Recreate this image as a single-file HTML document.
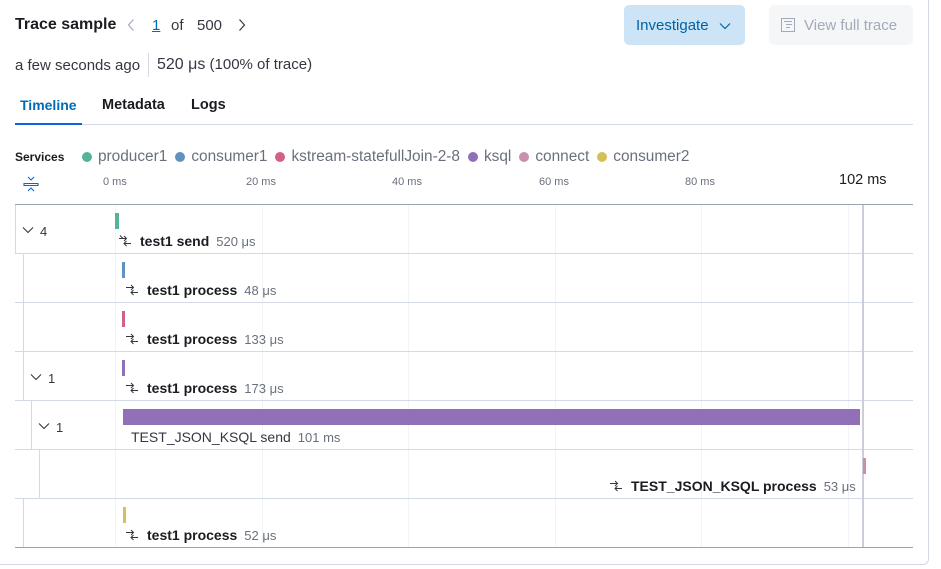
<!DOCTYPE html>
<html><head><meta charset="utf-8"><style>
*{box-sizing:border-box;margin:0;padding:0}
body{width:941px;height:569px;background:#fff;font-family:"Liberation Sans",sans-serif;color:#1a1c21;position:relative;overflow:hidden}
.panel{position:absolute;left:-10px;top:-10px;width:939px;height:575px;border:1px solid #d3dae6;border-radius:6px}
.a{position:absolute;white-space:nowrap}
.hl{position:absolute;left:15px;width:898px;height:1px;background:#d3dae6}
.vl{position:absolute;width:1px;background:#d3dae6}
.grid{position:absolute;top:205px;height:342px;width:1px;background:#f1f3f6}
.bar{position:absolute;width:3px;height:16px}
.lbl{position:absolute;font-size:14px;font-weight:bold;white-space:nowrap}
.lbl small{font-size:13px;font-weight:normal;color:#69707d;margin-left:7px}
.ic{display:inline-block;vertical-align:-2px;margin-right:8px}
.car{position:absolute;font-size:13px;color:#343741}
.dot{display:inline-block;width:10px;height:10px;border-radius:50%;margin:0 6px 0 0;vertical-align:-1px}
.sv{margin-right:8px}
</style></head><body>
<div class="panel"></div>
<div class="a" style="left:15px;top:16px;font-size:16px;font-weight:bold">Trace sample</div>
<svg class="a" style="left:127px;top:18px" width="8" height="14" viewBox="0 0 8 14"><path d="M6.5 1.5L1.5 7l5 5.5" fill="none" stroke="#a2abba" stroke-width="1.2"/></svg>
<div class="a" style="left:152px;top:17px;font-size:15px;color:#006bb8;text-decoration:underline">1</div>
<div class="a" style="left:171px;top:17px;font-size:15px;color:#343741">of</div>
<div class="a" style="left:197px;top:17px;font-size:15px;color:#343741">500</div>
<svg class="a" style="left:238px;top:18px" width="8" height="14" viewBox="0 0 8 14"><path d="M1.5 1.5L6.5 7l-5 5.5" fill="none" stroke="#343741" stroke-width="1.2"/></svg>
<div class="a" style="left:624px;top:5px;width:121px;height:40px;background:#cce4f5;border-radius:5px;color:#0061a6;font-size:15px;padding:12px 0 0 12px">Investigate <span style="display:inline-block;margin-left:6px"><svg width="12" height="8" viewBox="0 0 12 8"><path d="M1 1.5l5 5 5-5" fill="none" stroke="#0061a6" stroke-width="1.2"/></svg></span></div>
<div class="a" style="left:769px;top:5px;width:144px;height:40px;background:#f5f6f8;border-radius:5px;color:#a2abba;font-size:15px;padding:12px 0 0 11px"><svg width="16" height="16" viewBox="0 0 16 16" style="vertical-align:-3px;margin-right:8px"><rect x="1.5" y="1.5" width="13" height="13" fill="none" stroke="#a2abba"/><path d="M4 4.5h8M6 7.5h6M6 10.5h4" stroke="#a2abba"/></svg>View full trace</div>
<div class="a" style="left:15px;top:57px;font-size:15px;color:#343741">a few seconds ago</div>
<div class="vl" style="left:148px;top:53px;height:24px"></div>
<div class="a" style="left:157px;top:56px;font-size:15px;color:#343741"><span style="font-size:16px">520 μs</span> (100% of trace)</div>
<div class="a" style="left:20px;top:97px;font-size:14px;font-weight:bold;color:#006bb8">Timeline</div>
<div class="a" style="left:102px;top:97px;font-size:14.5px;font-weight:bold">Metadata</div>
<div class="a" style="left:191px;top:97px;font-size:14.5px;font-weight:bold">Logs</div>
<div class="a" style="left:15px;top:124px;width:898px;height:1px;background:#d3dae6"></div>
<div class="a" style="left:15px;top:123px;width:67px;height:2px;background:#0b64dd"></div>
<div class="a" style="left:15px;top:150px;font-size:12px;font-weight:bold">Services</div>
<div class="a" style="left:82px;top:148px;font-size:15.4px;color:#69707d">
<span class="dot" style="background:#54b399"></span><span class="sv">producer1</span><span class="dot" style="background:#6092c0"></span><span class="sv">consumer1</span><span class="dot" style="background:#d36086"></span><span class="sv">kstream-statefullJoin-2-8</span><span class="dot" style="background:#9170b8"></span><span class="sv">ksql</span><span class="dot" style="background:#ca8eae"></span><span class="sv">connect</span><span class="dot" style="background:#d6bf57"></span><span class="sv">consumer2</span></div>
<svg class="a" style="left:23px;top:176px" width="16" height="16" viewBox="0 0 16 16"><path d="M5 1l3 3 3-3M1 7.5h14v2H1zM5 15l3-3 3 3" fill="none" stroke="#0b64dd" stroke-width="1.1"/></svg>
<div class="a" style="left:103px;top:176px;font-size:11px;color:#69707d">0 ms</div>
<div class="a" style="left:246px;top:176px;font-size:11px;color:#69707d">20 ms</div>
<div class="a" style="left:392px;top:176px;font-size:11px;color:#69707d">40 ms</div>
<div class="a" style="left:539px;top:176px;font-size:11px;color:#69707d">60 ms</div>
<div class="a" style="left:685px;top:176px;font-size:11px;color:#69707d">80 ms</div>
<div class="a" style="left:839px;top:172px;font-size:14.5px">102 ms</div>
<div class="grid" style="left:115px"></div><div class="grid" style="left:262px"></div><div class="grid" style="left:408px"></div><div class="grid" style="left:555px"></div><div class="grid" style="left:701px"></div><div class="grid" style="left:848px"></div>
<div class="a" style="left:15px;top:204px;width:898px;height:1px;background:#98a2b3"></div>
<div class="hl" style="top:253px"></div><div class="hl" style="top:302px"></div><div class="hl" style="top:351px"></div><div class="hl" style="top:400px"></div><div class="hl" style="top:449px"></div><div class="hl" style="top:498px"></div>
<div class="hl" style="top:547px;background:#98a2b3"></div>
<div class="vl" style="left:15px;top:205px;height:48px"></div>
<div class="vl" style="left:23px;top:253px;height:147px"></div>
<div class="vl" style="left:31px;top:400px;height:49px"></div>
<div class="vl" style="left:39px;top:449px;height:49px"></div>
<div class="vl" style="left:23px;top:498px;height:49px"></div>
<div class="vl" style="left:862px;top:205px;height:342px;width:2px;background:#c9ced8"></div>
<svg class="a" style="left:22px;top:226px" width="12" height="8" viewBox="0 0 12 8"><path d="M1 1.5l5 5 5-5" fill="none" stroke="#343741" stroke-width="1.1"/></svg>
<div class="car" style="left:40px;top:224px">4</div>
<svg class="a" style="left:30px;top:373px" width="12" height="8" viewBox="0 0 12 8"><path d="M1 1.5l5 5 5-5" fill="none" stroke="#343741" stroke-width="1.1"/></svg>
<div class="car" style="left:48px;top:371px">1</div>
<svg class="a" style="left:38px;top:422px" width="12" height="8" viewBox="0 0 12 8"><path d="M1 1.5l5 5 5-5" fill="none" stroke="#343741" stroke-width="1.1"/></svg>
<div class="car" style="left:56px;top:420px">1</div>
<div class="bar" style="left:115px;top:213px;width:4px;background:#54b399"></div>
<div class="bar" style="left:122px;top:262px;background:#6092c0"></div>
<div class="bar" style="left:122px;top:311px;background:#d36086"></div>
<div class="bar" style="left:122px;top:360px;background:#9170b8"></div>
<div class="bar" style="left:123px;top:409px;width:737px;background:#9170b8"></div>
<div class="bar" style="left:863px;top:458px;background:#ca8eae"></div>
<div class="bar" style="left:123px;top:507px;background:#d6bf57"></div>
<div class="lbl" style="left:118px;top:233px"><svg class="ic" width="14" height="14" viewBox="0 0 14 14"><path d="M1 4.5h7M6 2l2.5 2.5L6 7M13 9.5H6M8.5 7L6 9.5 8.5 12M2 1.5l3 3" fill="none" stroke="#343741"/></svg>test1 send<small>520 μs</small></div>
<div class="lbl" style="left:125px;top:282px"><svg class="ic" width="14" height="14" viewBox="0 0 14 14"><path d="M1 4.5h7M6 2l2.5 2.5L6 7M13 9.5H6M8.5 7L6 9.5 8.5 12" fill="none" stroke="#343741"/></svg>test1 process<small>48 μs</small></div>
<div class="lbl" style="left:125px;top:331px"><svg class="ic" width="14" height="14" viewBox="0 0 14 14"><path d="M1 4.5h7M6 2l2.5 2.5L6 7M13 9.5H6M8.5 7L6 9.5 8.5 12" fill="none" stroke="#343741"/></svg>test1 process<small>133 μs</small></div>
<div class="lbl" style="left:125px;top:380px"><svg class="ic" width="14" height="14" viewBox="0 0 14 14"><path d="M1 4.5h7M6 2l2.5 2.5L6 7M13 9.5H6M8.5 7L6 9.5 8.5 12" fill="none" stroke="#343741"/></svg>test1 process<small>173 μs</small></div>
<div class="lbl" style="left:131px;top:429px;font-weight:normal;color:#343741">TEST_JSON_KSQL send<small>101 ms</small></div>
<div class="lbl" style="left:609px;top:478px"><svg class="ic" width="14" height="14" viewBox="0 0 14 14"><path d="M1 4.5h7M6 2l2.5 2.5L6 7M13 9.5H6M8.5 7L6 9.5 8.5 12" fill="none" stroke="#343741"/></svg>TEST_JSON_KSQL process<small>53 μs</small></div>
<div class="lbl" style="left:125px;top:527px"><svg class="ic" width="14" height="14" viewBox="0 0 14 14"><path d="M1 4.5h7M6 2l2.5 2.5L6 7M13 9.5H6M8.5 7L6 9.5 8.5 12" fill="none" stroke="#343741"/></svg>test1 process<small>52 μs</small></div>
</body></html>
